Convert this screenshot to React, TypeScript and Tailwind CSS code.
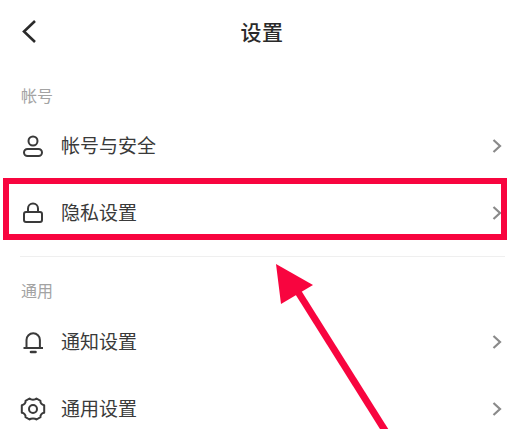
import React from "react";

const font = { fontFamily: '"Noto Sans CJK SC", "Liberation Sans", sans-serif' };

function Chevron() {
  return (
    <svg width="12" height="16" viewBox="0 0 12 16" fill="none" className="shrink-0">
      <path d="M2.5 2 L9 8 L2.5 14" stroke="#8a8a8a" strokeWidth="2.2" />
    </svg>
  );
}

const stroke = { stroke: "#3a3a3a", strokeWidth: 2, fill: "none" };

function UserIcon() {
  return (
    <svg width="26" height="26" viewBox="0 0 26 26">
      <circle cx="13" cy="8" r="4.5" {...stroke} />
      <rect x="4" y="16" width="18" height="7" rx="3.5" {...stroke} />
    </svg>
  );
}
function LockIcon() {
  return (
    <svg width="26" height="26" viewBox="0 0 26 26">
      <path d="M8 12 V8.5 a5 5 0 0 1 10 0 V12" {...stroke} />
      <rect x="4" y="12" width="18" height="10" rx="2" {...stroke} />
    </svg>
  );
}
function BellIcon() {
  return (
    <svg width="26" height="26" viewBox="0 0 26 26">
      <path d="M3.5 19 H23 M6.5 19 V11 a6.7 6.7 0 0 1 13.4 0 V19" {...stroke} />
      <path d="M11 23 H15.5" stroke="#3a3a3a" strokeWidth="2.6" strokeLinecap="round" />
    </svg>
  );
}
function GearIcon() {
  return (
    <svg width="26" height="26" viewBox="0 0 26 26">
      <path
        d="M9.5 2.5 C11 4 15 4 16.5 2.5 L20.5 4.8 C20 6.8 21.8 9 24.2 9.2 L24.2 16.8 C21.8 17 20 19.2 20.5 21.2 L16.5 23.5 C15 22 11 22 9.5 23.5 L5.5 21.2 C6 19.2 4.2 17 1.8 16.8 L1.8 9.2 C4.2 9 6 6.8 5.5 4.8 Z"
        strokeLinejoin="round"
        {...stroke}
      />
      <circle cx="13" cy="13" r="4" {...stroke} />
    </svg>
  );
}

function Row({ icon, label, className }: { icon: React.ReactNode; label: string; className: string }) {
  return (
    <div className={`flex items-center pl-[20px] pr-[17px] ${className}`}>
      <div className="w-[41px] shrink-0 flex items-center">{icon}</div>
      <span className="flex-1 mb-[2px] text-[19px] leading-[26px] text-[#3a3a3a]">{label}</span>
      <Chevron />
    </div>
  );
}

export default function App() {
  return (
    <div className="relative w-[520px] h-[429px] overflow-hidden bg-white" style={font}>
      <header className="relative h-[64px] flex items-center justify-center">
        <svg width="20" height="28" viewBox="0 0 20 28" className="absolute left-[20px] top-[17px]" fill="none">
          <path d="M15 4 L4 14.5 L15 25" stroke="#2a2a2a" strokeWidth="2.6" />
        </svg>
        <h1 className="ml-[4px] mb-[3px] text-[21px] leading-[28px] font-medium text-[#2a2a2a] tracking-[0.5px]">设置</h1>
      </header>

      <div className="pl-[21px] pt-[19px] pb-[1px] text-[16px] leading-[24px] text-[#a3a3a3]">帐号</div>
      <Row icon={<UserIcon />} label="帐号与安全" className="h-[67px] mt-[4px]" />
      <Row icon={<LockIcon />} label="隐私设置" className="h-[67px]" />

      <div className="ml-[20px] mr-[15px] mt-[10px] h-px bg-[#efefef]" />

      <div className="pl-[21px] pt-[21px] pb-[1px] text-[16px] leading-[24px] text-[#a3a3a3]">通用</div>
      <Row icon={<BellIcon />} label="通知设置" className="h-[67px] mt-[5px]" />
      <Row icon={<GearIcon />} label="通用设置" className="h-[67px]" />

      {/* Annotation overlay */}
      <div className="absolute left-[3px] top-[178px] w-[504px] h-[62px] border-[6px] border-[#f8053f]" />
      <svg width="520" height="429" viewBox="0 0 520 429" className="absolute left-0 top-0 pointer-events-none">
        <path d="M276 264 L313 285 L281 304 Z" fill="#f8053f" />
        <path d="M298 292 L386 432" stroke="#f8053f" strokeWidth="7" fill="none" />
      </svg>
    </div>
  );
}
